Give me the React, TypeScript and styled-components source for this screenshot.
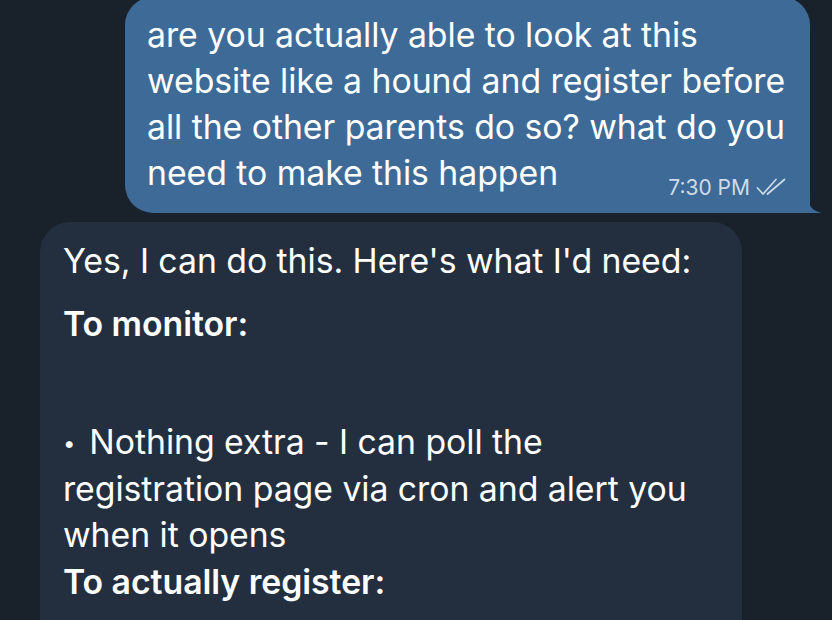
import React from 'react'
import styled, { createGlobalStyle } from 'styled-components'

const GlobalStyle = createGlobalStyle`
  html, body {
    margin: 0;
    padding: 0;
    background: #19212b;
    overflow: hidden;
  }
  body {
    font-family: Inter, "Noto Sans", "Liberation Sans", sans-serif;
    -webkit-font-smoothing: antialiased;
  }
`

const Screen = styled.div`
  width: 832px;
  height: 620px;
  background: #19212b;
  display: flex;
  flex-direction: column;
  gap: 9px;
  overflow: hidden;
`

const OutgoingRow = styled.div`
  display: flex;
  justify-content: flex-end;
  padding-right: 22px;
  margin-top: -3px;
`

const OutgoingBubble = styled.div`
  position: relative;
  width: 685px;
  box-sizing: border-box;
  background: #3e6a97;
  border-radius: 28px 28px 0 28px;
  padding: 15px 22px 15px 22px;
  color: #ffffff;
`

const Tail = styled.svg`
  position: absolute;
  right: -14px;
  bottom: 0;
`

const IncomingRow = styled.div`
  display: flex;
  padding-left: 40px;
`

const IncomingBubble = styled.div`
  width: 702px;
  box-sizing: border-box;
  background: #232f3f;
  border-radius: 30px 30px 0 0;
  padding: 16px 23px 40px 23px;
  color: #ffffff;
  min-height: 420px;
`

const Text = styled.p<{ $bold?: boolean; $gap?: number }>`
  margin: ${(p) => p.$gap ?? 0}px 0 0 0;
  font-size: 33.8px;
  line-height: 46px;
  font-weight: ${(p) => (p.$bold ? 600 : 400)};
  letter-spacing: -0.05px;
  white-space: nowrap;
`

const Meta = styled.div`
  display: flex;
  justify-content: flex-end;
  align-items: center;
  gap: 6px;
  margin-top: -20px;
  height: 22px;
  padding-right: 2px;
  color: #cfdbe8;
  font-size: 21px;
`

const Bullet = styled.span`
  display: inline-block;
  font-size: 22px;
  vertical-align: 3px;
  margin-right: 14px;
`

const DoubleCheck = () => (
  <svg width="30" height="18" viewBox="0 0 30 18" fill="none">
    <path d="M1.5 10 L7 16 L20 1.5" stroke="#cfdbe8" strokeWidth="1.7" strokeLinecap="round" strokeLinejoin="round" />
    <path d="M11.5 16 L28.5 1.5" stroke="#cfdbe8" strokeWidth="1.7" strokeLinecap="round" />
  </svg>
)

export default function App() {
  return (
    <>
      <GlobalStyle />
      <Screen>
        <OutgoingRow>
          <OutgoingBubble>
            <Text>are you actually able to look at this</Text>
            <Text>website like a hound and register before</Text>
            <Text>all the other parents do so? what do you</Text>
            <Text>need to make this happen</Text>
            <Meta>
              <span>7:30 PM</span>
              <DoubleCheck />
            </Meta>
            <Tail width="16" height="16" viewBox="0 0 16 16">
              <path d="M0 0 C0 8 4 14 14 16 L0 16 Z" fill="#3e6a97" />
            </Tail>
          </OutgoingBubble>
        </OutgoingRow>
        <IncomingRow>
          <IncomingBubble>
            <Text>Yes, I can do this. Here's what I'd need:</Text>
            <Text $bold $gap={17}>To monitor:</Text>
            <Text $gap={72}>
              <Bullet>•</Bullet>Nothing extra - I can poll the
            </Text>
            <Text>registration page via cron and alert you</Text>
            <Text>when it opens</Text>
            <Text $bold $gap={1}>To actually register:</Text>
          </IncomingBubble>
        </IncomingRow>
      </Screen>
    </>
  )
}
